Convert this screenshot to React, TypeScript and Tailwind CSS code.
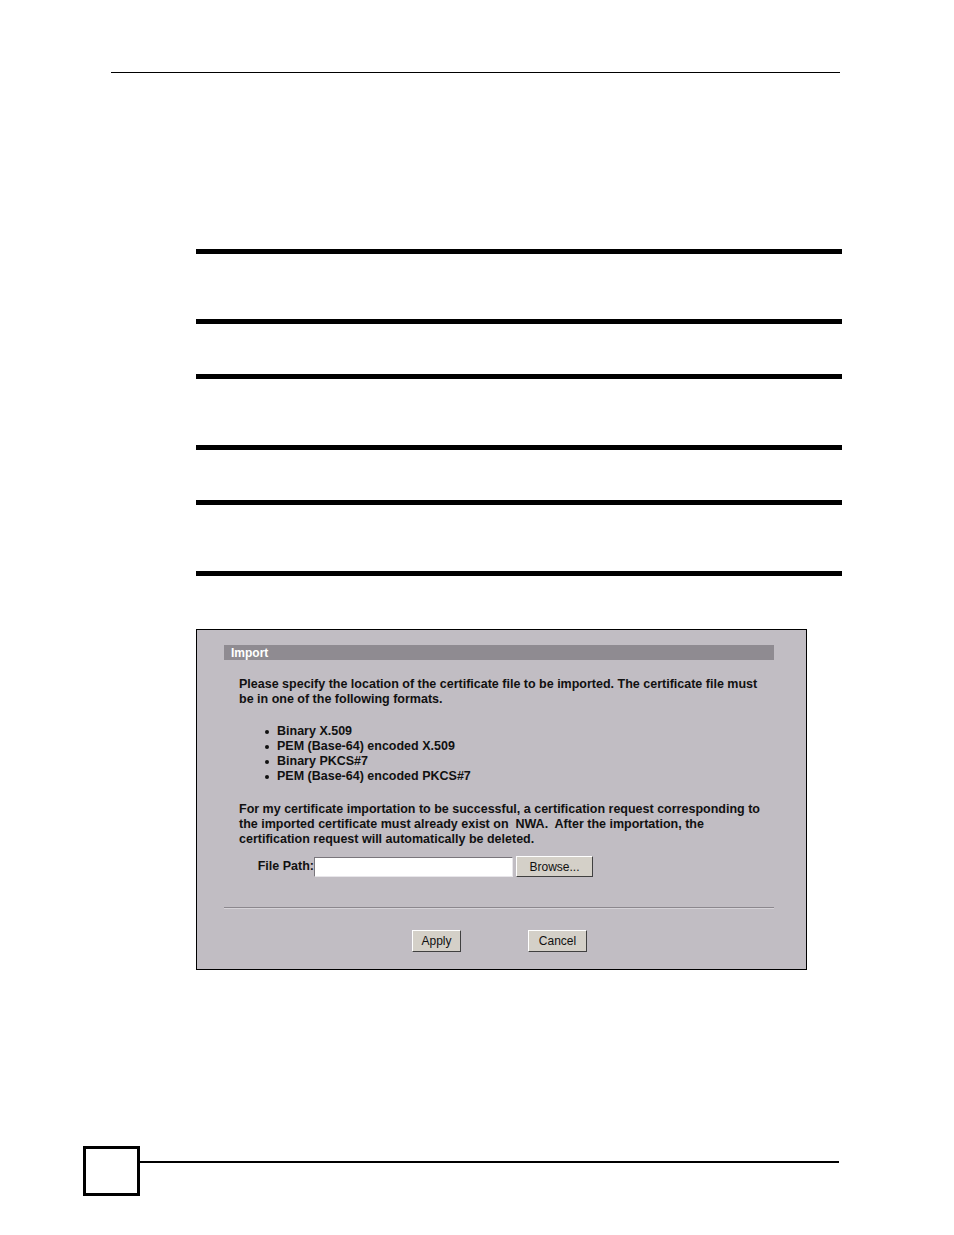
import React from "react";

export default function App() {
  const font = { fontFamily: '"Liberation Sans", Arial, sans-serif' };
  return (
    <div className="w-[954px] h-[1235px] bg-white relative overflow-hidden" style={font}>
      <div className="pt-[72px]">
        <div className="ml-[111px] w-[729px] h-[1px] bg-black" />
      </div>
      <div className="mt-[176px]">
        <div className="h-[5px] w-[646px] ml-[196px] bg-black" />
        <div className="h-[5px] w-[646px] ml-[196px] bg-black mt-[65px]" />
        <div className="h-[5px] w-[646px] ml-[196px] bg-black mt-[50px]" />
        <div className="h-[5px] w-[646px] ml-[196px] bg-black mt-[66px]" />
        <div className="h-[5px] w-[646px] ml-[196px] bg-black mt-[50px]" />
        <div className="h-[5px] w-[646px] ml-[196px] bg-black mt-[66px]" />
      </div>

      <div className="mt-[53px] ml-[196px] w-[611px] h-[341px] border border-black bg-[#c1bdc3] pl-[27px] pt-[15px]">
        <div className="w-[550px] h-[15px] bg-[#8f8b91] flex items-center pl-[7px]">
          <span className="text-white font-bold text-[12px] leading-none">Import</span>
        </div>
        <div className="pl-[15px] text-[12.5px] font-bold leading-[15px] text-[#111]">
          <p className="mt-[17px] whitespace-nowrap">
            Please specify the location of the certificate file to be imported. The certificate file must
            <br />
            be in one of the following formats.
          </p>
          <ul className="mt-[17px] pl-[26px]">
            {[
              "Binary X.509",
              "PEM (Base-64) encoded X.509",
              "Binary PKCS#7",
              "PEM (Base-64) encoded PKCS#7",
            ].map((t) => (
              <li key={t} className="flex items-center">
                <span className="w-[12px] flex items-center">
                  <span className="w-[4px] h-[4px] rounded-full bg-[#111] inline-block" />
                </span>
                {t}
              </li>
            ))}
          </ul>
          <p className="mt-[18px] whitespace-nowrap">
            For my certificate importation to be successful, a certification request corresponding to
            <br />
            the imported certificate must already exist on&nbsp; NWA.&nbsp; After the importation, the
            <br />
            certification request will automatically be deleted.
          </p>
        </div>
        <div className="mt-[9px] flex items-center pl-[16px]">
          <span className="text-[12.5px] font-bold text-[#111] w-[74px] text-right whitespace-nowrap">File Path:</span>
          <div className="w-[199px] h-[20px] bg-white border-t border-l border-[#7a767c] border-b border-r border-b-[#e8e6ea] border-r-[#e8e6ea]" />
          <button className="ml-[3px] w-[77px] h-[21px] bg-[#d4d0c8] border border-t-white border-l-white border-b-[#404040] border-r-[#404040] text-[12px] text-[#111] leading-none">
            Browse...
          </button>
        </div>
        <div className="mt-[30px] w-[550px] h-[1px] bg-[#8c888e]" />
        <div className="w-[550px] h-[1px] bg-[#d6d3d8]" />
        <div className="mt-[21px] w-[550px] flex justify-center gap-[67px] pl-[1px]">
          <button className="w-[49px] h-[22px] bg-[#d4d0c8] border border-t-white border-l-white border-b-[#404040] border-r-[#404040] text-[12px] text-[#111] leading-none">
            Apply
          </button>
          <button className="w-[59px] h-[22px] bg-[#d4d0c8] border border-t-white border-l-white border-b-[#404040] border-r-[#404040] text-[12px] text-[#111] leading-none">
            Cancel
          </button>
        </div>
      </div>

      <div className="mt-[176px] ml-[83px] flex items-start">
        <div className="w-[57px] h-[50px] border-[3px] border-black" />
        <div className="mt-[15px] w-[699px] h-[2px] bg-black" />
      </div>
    </div>
  );
}
